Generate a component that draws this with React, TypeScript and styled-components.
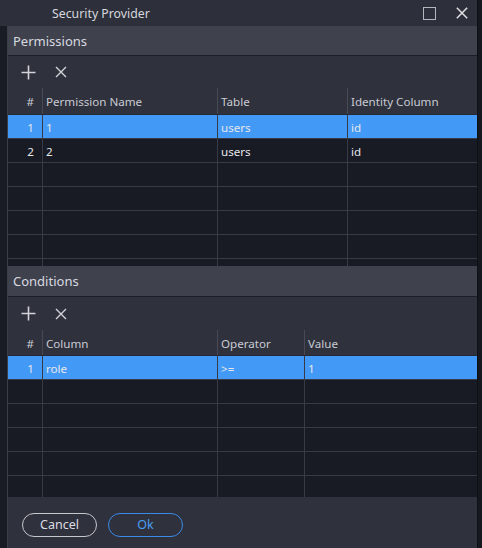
import React from 'react'
import styled, { createGlobalStyle } from 'styled-components'

const GlobalStyle = createGlobalStyle`
  html, body {
    margin: 0;
    padding: 0;
    background: #161820;
  }
  body {
    font-family: "Noto Sans", "Open Sans", "Liberation Sans", sans-serif;
  }
`

const Screen = styled.div`
  display: flex;
  width: 482px;
  height: 548px;
  overflow: hidden;
`

const Dialog = styled.div`
  display: flex;
  flex-direction: column;
  width: 477px;
  height: 548px;
  background: #2d2f3a;
`

const BackWindow = styled.div`
  flex: 1;
  background: #161820;
  border-left: 1px solid #0f1016;
`

const TitleBar = styled.div`
  display: flex;
  align-items: center;
  height: 26px;
  padding-left: 52px;
  background: #2d2f3a;
  color: #d6d8de;
  font-size: 12.3px;
`

const Title = styled.span`
  flex: 1;
`

const TitleButton = styled.div<{ $w: number }>`
  display: flex;
  align-items: center;
  justify-content: center;
  width: ${(p) => p.$w}px;
  height: 26px;
`

const Body = styled.div`
  display: flex;
  flex: 1;
  min-height: 0;
`

const Gutter = styled.div`
  width: 7px;
  background: #1a1c25;
  border-right: 1px solid #3b3d48;
`

const Content = styled.div`
  display: flex;
  flex-direction: column;
  flex: 1;
  min-width: 0;
`

const SectionHeader = styled.div<{ $h: number }>`
  display: flex;
  align-items: center;
  height: ${(p) => p.$h}px;
  padding-left: 5px;
  background: #3f414c;
  border-bottom: 1px solid #1c1e27;
  color: #d8dae0;
  font-size: 13px;
`

const Toolbar = styled.div<{ $h: number }>`
  display: flex;
  align-items: center;
  gap: 13px;
  height: ${(p) => p.$h}px;
  padding-left: 10px;
  background: #2f313d;
`

const ToolButton = styled.div`
  display: flex;
  align-items: center;
  justify-content: center;
  width: 20px;
  height: 20px;
  color: #d2d4da;
`

const Row = styled.div<{ $cols: string; $h: number; $selected?: boolean; $head?: boolean }>`
  display: grid;
  grid-template-columns: ${(p) => p.$cols};
  height: ${(p) => p.$h}px;
  flex-shrink: 0;
  background: ${(p) => (p.$head ? '#2f313d' : p.$selected ? '#4399f6' : '#181a24')};
  border-bottom: 1px solid ${(p) => (p.$head ? '#262832' : '#383a45')};
  color: ${(p) => (p.$head ? '#c9cbd2' : '#e6e7ea')};
  font-size: 11.6px;
`

const Cell = styled.div<{ $num?: boolean; $head?: boolean }>`
  display: flex;
  align-items: center;
  justify-content: ${(p) => (p.$num ? 'flex-end' : 'flex-start')};
  padding: ${(p) => (p.$num ? '1px 8px 0 0' : '1px 0 0 3px')};
  border-right: 1px solid ${(p) => (p.$head ? '#474955' : '#383a45')};
  white-space: nowrap;
  overflow: hidden;
  &:last-child {
    border-right: none;
  }
`

const TableBody = styled.div<{ $h: number }>`
  display: flex;
  flex-direction: column;
  height: ${(p) => p.$h}px;
  overflow: hidden;
  background: #181a24;
`

const Footer = styled.div`
  display: flex;
  align-items: center;
  gap: 11px;
  flex: 1;
  padding: 4px 0 0 14px;
  background: #2f313d;
`

const PillButton = styled.button<{ $primary?: boolean }>`
  width: 75px;
  height: 24px;
  border-radius: 12px;
  background: transparent;
  border: 1px solid ${(p) => (p.$primary ? '#3a8be8' : '#c6c7cc')};
  color: ${(p) => (p.$primary ? '#4a9ef2' : '#dcdde2')};
  font-family: inherit;
  font-size: 12.5px;
  padding: 0 0 1px;
`

const PlusIcon = () => (
  <svg width="15" height="15" viewBox="0 0 15 15">
    <path d="M7.5 0.5v14M0.5 7.5h14" stroke="currentColor" strokeWidth="1.6" fill="none" />
  </svg>
)

const CrossIcon = () => (
  <svg width="12" height="12" viewBox="0 0 12 12">
    <path d="M1 1l10 10M11 1L1 11" stroke="currentColor" strokeWidth="1.4" fill="none" />
  </svg>
)

type TableProps = {
  cols: string
  headers: string[]
  rows: string[][]
  headH: number
  bodyH: number
  selected?: number
}

const Table: React.FC<TableProps> = ({ cols, headers, rows, headH, bodyH, selected }) => {
  const filler = Array.from({ length: 8 })
  return (
    <>
      <Row $cols={cols} $h={headH} $head>
        {headers.map((h, i) => (
          <Cell key={h} $head $num={i === 0}>
            {h}
          </Cell>
        ))}
      </Row>
      <TableBody $h={bodyH}>
        {rows.map((r, ri) => (
          <Row key={ri} $cols={cols} $h={23} $selected={ri === selected}>
            <Cell $num>{ri + 1}</Cell>
            {r.map((c, ci) => (
              <Cell key={ci}>{c}</Cell>
            ))}
          </Row>
        ))}
        {filler.map((_, fi) => (
          <Row key={'f' + fi} $cols={cols} $h={23}>
            {headers.map((h) => (
              <Cell key={h} />
            ))}
          </Row>
        ))}
      </TableBody>
    </>
  )
}

const App: React.FC = () => {
  return (
    <>
      <GlobalStyle />
      <Screen>
        <Dialog>
          <TitleBar>
            <Title>Security Provider</Title>
            <TitleButton $w={36}>
              <svg width="13" height="13" viewBox="0 0 13 13">
                <rect x="0.5" y="0.5" width="12" height="12" stroke="#b4b6bc" fill="none" />
              </svg>
            </TitleButton>
            <TitleButton $w={30}>
              <svg width="12" height="12" viewBox="0 0 12 12">
                <path d="M0.8 0.8l10.4 10.4M11.2 0.8L0.8 11.2" stroke="#dfe0e4" strokeWidth="1.5" fill="none" />
              </svg>
            </TitleButton>
          </TitleBar>
          <Body>
            <Gutter />
            <Content>
              <SectionHeader $h={29}>Permissions</SectionHeader>
              <Toolbar $h={32}>
                <ToolButton>
                  <PlusIcon />
                </ToolButton>
                <ToolButton>
                  <CrossIcon />
                </ToolButton>
              </Toolbar>
              <Table
                cols="35px 175px 130px 1fr"
                headers={['#', 'Permission Name', 'Table', 'Identity Column']}
                rows={[
                  ['1', 'users', 'id'],
                  ['2', 'users', 'id'],
                ]}
                headH={26}
                bodyH={151}
                selected={0}
              />
              <SectionHeader $h={30}>Conditions</SectionHeader>
              <Toolbar $h={33}>
                <ToolButton>
                  <PlusIcon />
                </ToolButton>
                <ToolButton>
                  <CrossIcon />
                </ToolButton>
              </Toolbar>
              <Table
                cols="35px 175px 87px 1fr"
                headers={['#', 'Column', 'Operator', 'Value']}
                rows={[['role', '>=', '1']]}
                headH={25}
                bodyH={141}
                selected={0}
              />
              <Footer>
                <PillButton>Cancel</PillButton>
                <PillButton $primary>Ok</PillButton>
              </Footer>
            </Content>
          </Body>
        </Dialog>
        <BackWindow />
      </Screen>
    </>
  )
}

export default App
